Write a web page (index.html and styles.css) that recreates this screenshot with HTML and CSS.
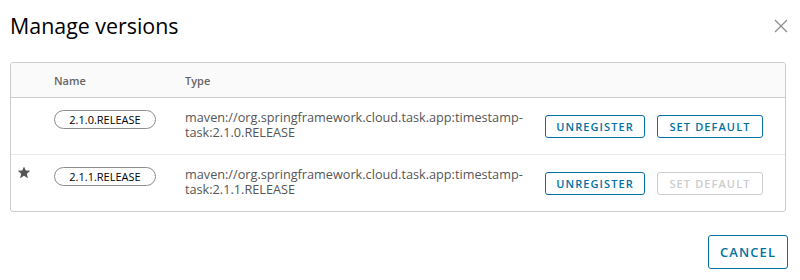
FILE: index.html
```html
<!DOCTYPE html>
<html>
<head>
<meta charset="utf-8">
<link rel="stylesheet" href="styles.css">
</head>
<body>
<div class="modal">
  <div class="modal-header">
    <h3 class="modal-title">Manage versions</h3>
    <button class="close" aria-label="Close">
      <svg width="14" height="14" viewBox="0 0 14 14"><path d="M1 1 L13 13 M13 1 L1 13" stroke="#8c8c8c" stroke-width="1.2" fill="none"/></svg>
    </button>
  </div>
  <div class="datagrid">
    <div class="row head">
      <div class="cell c-star"></div>
      <div class="cell c-name">Name</div>
      <div class="cell c-type">Type</div>
      <div class="cell c-actions"></div>
    </div>
    <div class="row">
      <div class="cell c-star"></div>
      <div class="cell c-name"><span class="badge">2.1.0.RELEASE</span></div>
      <div class="cell c-type">maven://org.springframework.cloud.task.app:timestamp-task:2.1.0.RELEASE</div>
      <div class="cell c-actions">
        <button class="btn btn-unreg">UNREGISTER</button>
        <button class="btn btn-def">SET DEFAULT</button>
      </div>
    </div>
    <div class="row last">
      <div class="cell c-star">
        <svg width="14" height="13" viewBox="0 0 24 23"><path d="M12 0.8 L15.1 8 L23 8.6 L17 13.8 L18.9 21.6 L12 17.4 L5.1 21.6 L7 13.8 L1 8.6 L8.9 8 Z" fill="#565656"/></svg>
      </div>
      <div class="cell c-name"><span class="badge">2.1.1.RELEASE</span></div>
      <div class="cell c-type">maven://org.springframework.cloud.task.app:timestamp-task:2.1.1.RELEASE</div>
      <div class="cell c-actions">
        <button class="btn btn-unreg">UNREGISTER</button>
        <button class="btn btn-def" disabled>SET DEFAULT</button>
      </div>
    </div>
  </div>
  <div class="modal-footer">
    <button class="btn btn-cancel">CANCEL</button>
  </div>
</div>
</body>
</html>
```
FILE: styles.css
```css
* { box-sizing: border-box; }
html, body { margin: 0; padding: 0; background: #fff; }
body { font-family: "Open Sans", "Liberation Sans", sans-serif; color: #565656; }
.modal { width: 800px; height: 280px; padding: 0 12px 0 10px; }
.modal-header { display: flex; justify-content: space-between; align-items: flex-start; height: 62px; }
.modal-title { margin: 12px 0 0 0; font-weight: 400; font-size: 21.4px; line-height: 28px; color: #000; }
.close { margin: 19px 0 0 0; padding: 0; border: 0; background: none; width: 14px; height: 14px; display: block; }
.close svg { display: block; }
.datagrid { width: 776px; border: 1px solid #ccc; border-radius: 3px; overflow: hidden; }
.row { display: grid; grid-template-columns: 43px 131px 360px 1fr; border-bottom: 1px solid #e8e8e8; }
.row.last { border-bottom: 0; }
.row.head { background: #fafafa; height: 35px; border-bottom-color: #ccc; align-items: center; }
.head .cell { font-size: 11px; font-weight: 600; color: #666; padding-top: 1px; }
.row:not(.head) { height: 57px; }
.row.last { height: 56px; }
.cell { font-size: 12.7px; line-height: 15px; }
.c-star { display: flex; justify-content: flex-start; padding-top: 11px; padding-left: 6px; }
.c-name { padding-top: 12px; }
.row:not(.head) .c-type { padding-top: 12px; width: 350px; color: #565656; }
.badge { display: inline-block; height: 19px; line-height: 17px; width: 102px; text-align: center; border: 1px solid #8c8c8c; border-radius: 10px; font-size: 11px; color: #000; }
.c-actions { display: flex; gap: 12px; padding-top: 17px; padding-left: 0; }
.btn { font-family: inherit; background: #fff; border: 1px solid #0072a3; border-radius: 3px; color: #0072a3; font-weight: 600; letter-spacing: 1.1px; cursor: pointer; padding: 0; }
.btn-unreg { width: 100px; height: 23px; font-size: 11px; }
.btn-def { width: 106px; height: 23px; font-size: 11px; }
.btn[disabled] { border-color: #ccc; color: #ccc; }
.modal-footer { display: flex; justify-content: flex-end; padding-top: 23px; }
.btn-cancel { width: 80px; height: 34px; font-size: 13px; }
```
